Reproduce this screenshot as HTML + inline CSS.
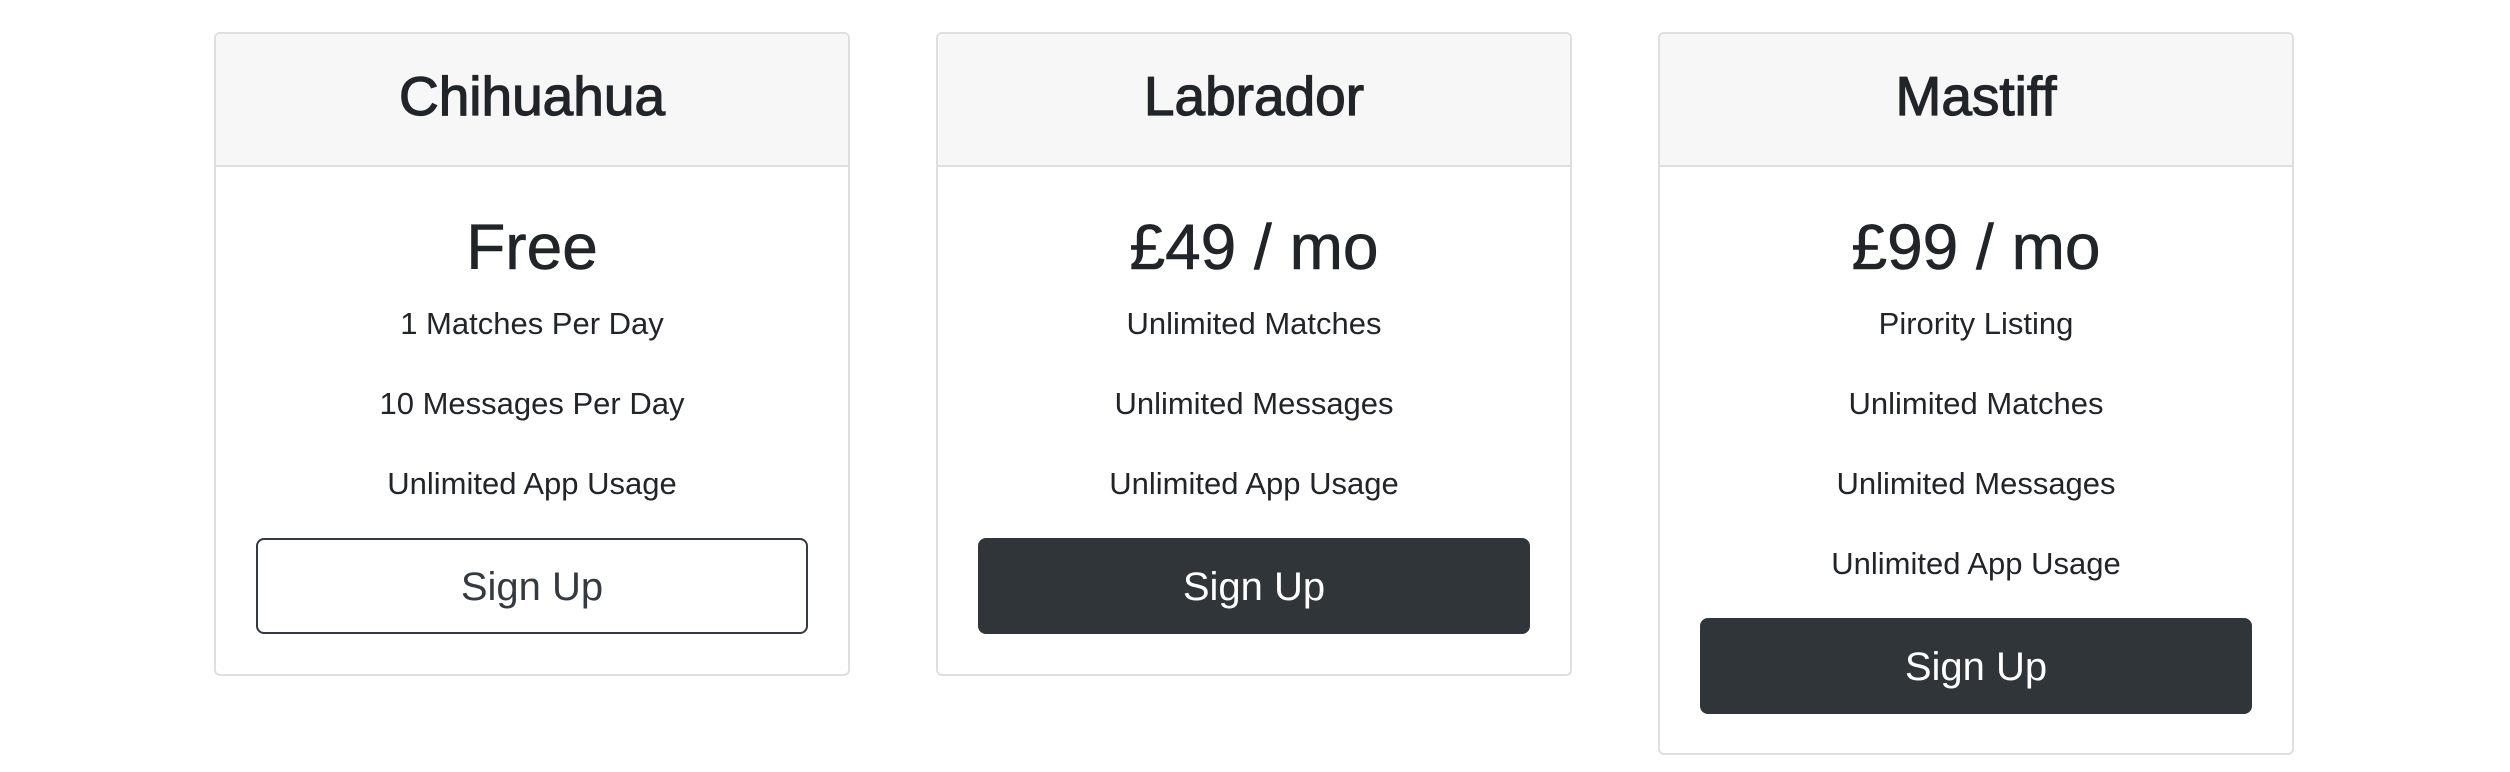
<!DOCTYPE html>
<html><head><meta charset="utf-8"><style>
*{box-sizing:border-box;margin:0;padding:0}
body{width:2510px;height:772px;background:#fff;font-family:"Liberation Sans",sans-serif;color:#212529;position:relative;overflow:hidden}
.card{position:absolute;top:32px;width:636px;border:2px solid #dfdfdf;border-radius:6px;background:#fff}
.hd{height:133px;background:#f7f7f7;border-bottom:2px solid #dfdfdf;border-radius:6px 6px 0 0;text-align:center;font-size:55px;line-height:124px;font-weight:normal;-webkit-text-stroke:1.2px #212529}
.t{position:absolute;left:0;right:0;text-align:center}
.price{font-size:64px;top:177px;line-height:72px;-webkit-text-stroke:0.6px #212529}
.li{font-size:31px;line-height:40px}
.btn{position:absolute;left:40px;right:40px;height:96px;border-radius:8px;font-size:40px;line-height:98px;text-align:center}
.o{border:2px solid #343a40;color:#343a40;line-height:94px}
.d{background:#30353a;color:#fff}
</style></head><body>
<div class="card" style="left:214px;height:644px">
<div class="hd">Chihuahua</div>
<div class="t price">Free</div>
<div class="t li" style="top:270px">1 Matches Per Day</div>
<div class="t li" style="top:350px">10 Messages Per Day</div>
<div class="t li" style="top:430px">Unlimited App Usage</div>
<div class="btn o" style="top:504px">Sign Up</div>
</div>
<div class="card" style="left:936px;height:644px">
<div class="hd">Labrador</div>
<div class="t price">£49 / mo</div>
<div class="t li" style="top:270px">Unlimited Matches</div>
<div class="t li" style="top:350px">Unlimited Messages</div>
<div class="t li" style="top:430px">Unlimited App Usage</div>
<div class="btn d" style="top:504px">Sign Up</div>
</div>
<div class="card" style="left:1658px;height:723px">
<div class="hd">Mastiff</div>
<div class="t price">£99 / mo</div>
<div class="t li" style="top:270px">Pirority Listing</div>
<div class="t li" style="top:350px">Unlimited Matches</div>
<div class="t li" style="top:430px">Unlimited Messages</div>
<div class="t li" style="top:510px">Unlimited App Usage</div>
<div class="btn d" style="top:584px">Sign Up</div>
</div>
</body></html>
